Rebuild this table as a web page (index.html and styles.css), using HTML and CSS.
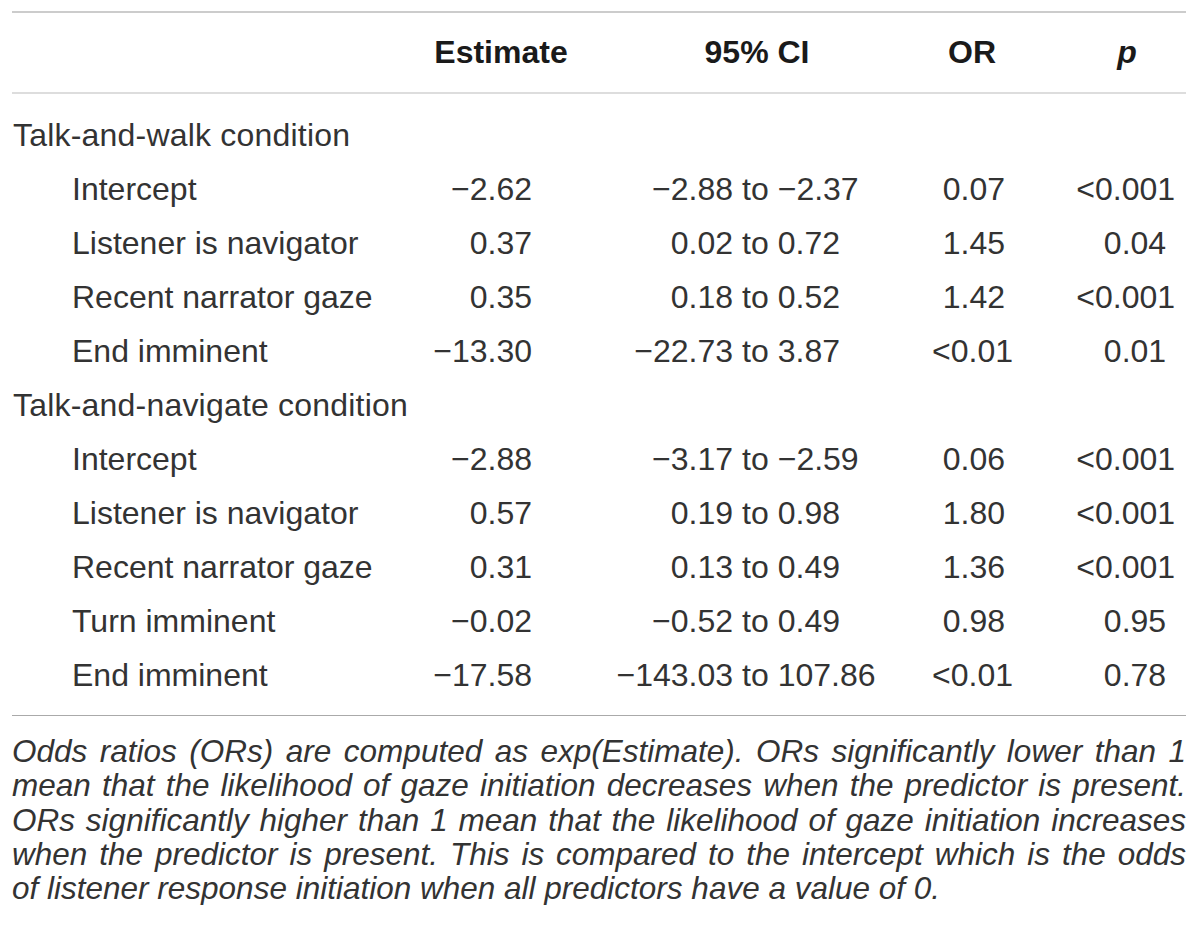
FILE: index.html
```html
<!DOCTYPE html>
<html>

<head>
  <meta charset="utf-8" name="viewport" content="width=device-width, initial-scale=1">
  <title>Gaze initiation model</title>
  <link rel="stylesheet" href="styles.css">
</head>

<body>
  <div class="tbl">
    <div class="row head">
      <div class="c-label"></div>
      <div class="c-est">Estimate</div>
      <div class="c-ci">95% CI</div>
      <div class="c-or">OR</div>
      <div class="c-p"><i>p</i></div>
    </div>

    <div class="tbody">
      <div class="row">
        <div class="c-label group">Talk-and-walk condition</div>
      </div>
      <div class="row">
        <div class="c-label">Intercept</div>
        <div class="c-est">&minus;2.62</div>
        <div class="c-ci"><span class="lo">&minus;2.88</span><span class="to">to</span><span>&minus;2.37</span></div>
        <div class="c-or">0.07</div>
        <div class="c-p"><span class="lt">&lt;</span>0.001</div>
      </div>
      <div class="row">
        <div class="c-label">Listener is navigator</div>
        <div class="c-est">0.37</div>
        <div class="c-ci"><span class="lo">0.02</span><span class="to">to</span><span>0.72</span></div>
        <div class="c-or">1.45</div>
        <div class="c-p">0.04</div>
      </div>
      <div class="row">
        <div class="c-label">Recent narrator gaze</div>
        <div class="c-est">0.35</div>
        <div class="c-ci"><span class="lo">0.18</span><span class="to">to</span><span>0.52</span></div>
        <div class="c-or">1.42</div>
        <div class="c-p"><span class="lt">&lt;</span>0.001</div>
      </div>
      <div class="row">
        <div class="c-label">End imminent</div>
        <div class="c-est">&minus;13.30</div>
        <div class="c-ci"><span class="lo">&minus;22.73</span><span class="to">to</span><span>3.87</span></div>
        <div class="c-or">&lt;0.01</div>
        <div class="c-p">0.01</div>
      </div>

      <div class="row">
        <div class="c-label group">Talk-and-navigate condition</div>
      </div>
      <div class="row">
        <div class="c-label">Intercept</div>
        <div class="c-est">&minus;2.88</div>
        <div class="c-ci"><span class="lo">&minus;3.17</span><span class="to">to</span><span>&minus;2.59</span></div>
        <div class="c-or">0.06</div>
        <div class="c-p"><span class="lt">&lt;</span>0.001</div>
      </div>
      <div class="row">
        <div class="c-label">Listener is navigator</div>
        <div class="c-est">0.57</div>
        <div class="c-ci"><span class="lo">0.19</span><span class="to">to</span><span>0.98</span></div>
        <div class="c-or">1.80</div>
        <div class="c-p"><span class="lt">&lt;</span>0.001</div>
      </div>
      <div class="row">
        <div class="c-label">Recent narrator gaze</div>
        <div class="c-est">0.31</div>
        <div class="c-ci"><span class="lo">0.13</span><span class="to">to</span><span>0.49</span></div>
        <div class="c-or">1.36</div>
        <div class="c-p"><span class="lt">&lt;</span>0.001</div>
      </div>
      <div class="row">
        <div class="c-label">Turn imminent</div>
        <div class="c-est">&minus;0.02</div>
        <div class="c-ci"><span class="lo">&minus;0.52</span><span class="to">to</span><span>0.49</span></div>
        <div class="c-or">0.98</div>
        <div class="c-p">0.95</div>
      </div>
      <div class="row">
        <div class="c-label">End imminent</div>
        <div class="c-est">&minus;17.58</div>
        <div class="c-ci"><span class="lo">&minus;143.03</span><span class="to">to</span><span>107.86</span></div>
        <div class="c-or">&lt;0.01</div>
        <div class="c-p">0.78</div>
      </div>
    </div>

    <div class="foot">
      <span class="line">Odds ratios (ORs) are computed as exp(Estimate). ORs significantly lower than 1</span>
      <span class="line">mean that the likelihood of gaze initiation decreases when the predictor is present.</span>
      <span class="line">ORs significantly higher than 1 mean that the likelihood of gaze initiation increases</span>
      <span class="line">when the predictor is present. This is compared to the intercept which is the odds</span>
      <span class="line last">of listener response initiation when all predictors have a value of 0.</span>
    </div>
  </div>
</body>

</html>
```

FILE: styles.css
```css
body {
  margin: 0;
  background-color: white;
  color: #333;
  font-family: "Liberation Sans", Arial, sans-serif;
}

.tbl {
  width: 1174px;
  margin: 11px 0 0 12px;
  border-top: 2px solid #cccccc;
}

.row {
  display: grid;
  grid-template-columns: 408px 162px 350px 108px 146px;
  align-items: center;
  height: 54px;
  font-size: 32px;
  white-space: nowrap;
}

.head {
  height: 79px;
  font-size: 32px;
  font-weight: bold;
  color: #1a1a1a;
  border-bottom: 2px solid #dddddd;
}

.head .c-est {
  text-align: center;
  padding-right: 0;
}

.head .c-ci {
  display: block;
  text-align: center;
}

.head .c-or {
  text-align: center;
  padding-right: 28px;
}

.head .c-p {
  padding-left: 28px;
}

.tbody {
  padding: 14px 0 13px 0;
  border-bottom: 1px solid #aaaaaa;
}

.c-label {
  padding-left: 60px;
}

.c-label.group {
  padding-left: 1px;
  letter-spacing: 0.2px;
}

.c-est {
  text-align: right;
  padding-right: 50px;
}

.c-ci {
  display: grid;
  grid-template-columns: 151px auto 1fr;
}

.c-ci .lo {
  text-align: right;
}

.c-ci .to {
  margin: 0 9px;
}

.c-or {
  text-align: right;
  padding-right: 35px;
}

.c-p {
  text-align: center;
  padding-left: 44px;
}

.lt {
  margin-left: -0.584em;
}

.foot {
  padding-top: 18px;
  font-size: 31.5px;
  font-style: italic;
  line-height: 34.3px;
  color: #333;
}

.line {
  display: block;
  text-align: justify;
  text-align-last: justify;
  white-space: nowrap;
}

.line.last {
  text-align-last: left;
}
```
